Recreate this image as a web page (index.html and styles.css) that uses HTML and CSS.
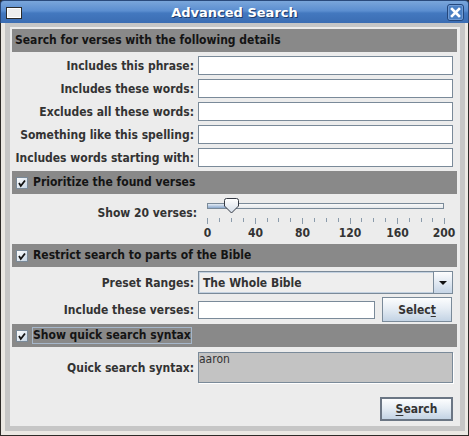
FILE: index.html
```html
<!DOCTYPE html>
<html>
<head>
<meta charset="utf-8">
<title>Advanced Search</title>
<link rel="stylesheet" href="styles.css">
</head>
<body>
<div class="window">
  <div class="titlebar">
    <svg class="win-icon" width="16" height="12" viewBox="0 0 16 12">
      <rect x="0.5" y="0.5" width="15" height="11" fill="#d8d8d8" stroke="#2b2b2b"/>
      <rect x="1.5" y="1.5" width="13" height="9" fill="#eeeeee" stroke="#ffffff"/>
    </svg>
    <div class="title">Advanced Search</div>
    <svg class="close" width="17" height="17" viewBox="0 0 17 17">
      <rect x="0.5" y="0.5" width="16" height="16" rx="2.5" fill="#4a7fc3" stroke="#23467b"/>
      <rect x="1.5" y="1.5" width="14" height="14" rx="1.5" fill="none" stroke="#6f9ad3"/>
      <path d="M5 5 L12 12 M12 5 L5 12" stroke="#ffffff" stroke-width="2.6" stroke-linecap="square"/>
    </svg>
  </div>
  <div class="frame">
    <div class="panel">
      <div class="head"><span class="head-text">Search for verses with the following details</span></div>
      <div class="grid fields">
        <label class="lbl">Includes this phrase:</label><div class="input"></div>
        <label class="lbl">Includes these words:</label><div class="input"></div>
        <label class="lbl">Excludes all these words:</label><div class="input"></div>
        <label class="lbl">Something like this spelling:</label><div class="input"></div>
        <label class="lbl">Includes words starting with:</label><div class="input"></div>
      </div>

      <div class="head check">
        <svg class="cb" width="12" height="12" viewBox="0 0 12 12"><use href="#cbox"/></svg>
        <span class="head-text">Prioritize the found verses</span>
      </div>
      <div class="grid slider-body">
        <label class="lbl slider-lbl">Show 20 verses:</label>
        <svg class="slider" width="255" height="50" viewBox="0 0 255 50">
          <defs>
            <linearGradient id="fillg" x1="0" y1="0" x2="0" y2="1">
              <stop offset="0" stop-color="#e4ecf5"/>
              <stop offset="1" stop-color="#8ba8cc"/>
            </linearGradient>
            <linearGradient id="trackg" x1="0" y1="0" x2="0" y2="1">
              <stop offset="0" stop-color="#fbfbfb"/>
              <stop offset="1" stop-color="#e2e6ea"/>
            </linearGradient>
            <linearGradient id="thumbg" x1="0" y1="0" x2="0" y2="1">
              <stop offset="0" stop-color="#ffffff"/>
              <stop offset="1" stop-color="#d4dde8"/>
            </linearGradient>
          </defs>
          <rect x="9.5" y="9.5" width="236" height="5" fill="url(#trackg)" stroke="#7a8a99"/>
          <rect x="10" y="10" width="23" height="4" fill="url(#fillg)"/>
          <path d="M26.5 6.5 Q26.5 4.5 28.5 4.5 H38.5 Q40.5 4.5 40.5 6.5 V12 L33.5 19 L26.5 12 Z" fill="url(#thumbg)" stroke="#353a44"/>
          <g stroke="#8b9bab" stroke-width="1">
            <line x1="9.5" y1="24" x2="9.5" y2="30"/>
            <line x1="21.5" y1="24" x2="21.5" y2="28"/>
            <line x1="33.5" y1="24" x2="33.5" y2="28"/>
            <line x1="45.5" y1="24" x2="45.5" y2="28"/>
            <line x1="57.5" y1="24" x2="57.5" y2="30"/>
            <line x1="69.5" y1="24" x2="69.5" y2="28"/>
            <line x1="80.5" y1="24" x2="80.5" y2="28"/>
            <line x1="92.5" y1="24" x2="92.5" y2="28"/>
            <line x1="104.5" y1="24" x2="104.5" y2="30"/>
            <line x1="116.5" y1="24" x2="116.5" y2="28"/>
            <line x1="128.5" y1="24" x2="128.5" y2="28"/>
            <line x1="140.5" y1="24" x2="140.5" y2="28"/>
            <line x1="152.5" y1="24" x2="152.5" y2="30"/>
            <line x1="163.5" y1="24" x2="163.5" y2="28"/>
            <line x1="175.5" y1="24" x2="175.5" y2="28"/>
            <line x1="187.5" y1="24" x2="187.5" y2="28"/>
            <line x1="199.5" y1="24" x2="199.5" y2="30"/>
            <line x1="211.5" y1="24" x2="211.5" y2="28"/>
            <line x1="223.5" y1="24" x2="223.5" y2="28"/>
            <line x1="234.5" y1="24" x2="234.5" y2="28"/>
            <line x1="246.5" y1="24" x2="246.5" y2="30"/>
          </g>
          <g class="tick-lbl" text-anchor="middle">
            <text x="9.5" y="43">0</text>
            <text x="57.5" y="43">40</text>
            <text x="104.5" y="43">80</text>
            <text x="152" y="43">120</text>
            <text x="199.5" y="43">160</text>
            <text x="246" y="43">200</text>
          </g>
        </svg>
      </div>

      <div class="head check">
        <svg class="cb" width="12" height="12" viewBox="0 0 12 12"><use href="#cbox"/></svg>
        <span class="head-text">Restrict search to parts of the Bible</span>
      </div>
      <div class="grid range-body">
        <label class="lbl">Preset Ranges:</label>
        <div class="combo">
          <span class="combo-text">The Whole Bible</span>
          <span class="combo-btn"><svg width="8" height="4" viewBox="0 0 8 4"><path d="M0 0 H8 L4 4 Z" fill="#111"/></svg></span>
        </div>
        <label class="lbl">Include these verses:</label>
        <div class="verse-row">
          <div class="input short"></div>
          <button class="btn select">Selec<u>t</u></button>
        </div>
      </div>

      <div class="head check">
        <svg class="cb" width="12" height="12" viewBox="0 0 12 12"><use href="#cbox"/></svg>
        <span class="head-text focus">Show quick search syntax</span>
      </div>
      <div class="grid syntax-body">
        <label class="lbl">Quick search syntax:</label>
        <div class="syntax">aaron</div>
        <button class="btn default search"><u>S</u>earch</button>
      </div>
    </div>
  </div>
</div>

<svg width="0" height="0" class="defs">
  <defs>
    <linearGradient id="cbg" x1="0" y1="0" x2="1" y2="1">
      <stop offset="0" stop-color="#ffffff"/>
      <stop offset="1" stop-color="#c4d3e3"/>
    </linearGradient>
    <g id="cbox">
      <rect x="0.5" y="0.5" width="11" height="11" fill="url(#cbg)" stroke="#7a8a99"/>
      <path d="M3 6 L4.8 9 L9 3.5" fill="none" stroke="#111" stroke-width="1.8"/>
    </g>
  </defs>
</svg>
</body>
</html>
```
FILE: styles.css
```css
* { box-sizing: border-box; }

html, body {
  margin: 0;
  padding: 0;
}

body {
  width: 469px;
  height: 436px;
  overflow: hidden;
  background: #2e2b28;
  font-family: "DejaVu Sans Condensed", "DejaVu Sans", sans-serif;
  font-stretch: condensed;
  font-size: 12px;
  color: #333333;
}

.window {
  width: 469px;
  height: 436px;
  display: flex;
  flex-direction: column;
}

.titlebar {
  flex: none;
  height: 23px;
  display: grid;
  grid-template-columns: 24px 1fr 24px;
  align-items: center;
  background: linear-gradient(#7aa6db 0%, #5b8ed0 45%, #4378bf 55%, #3b6db3 100%);
  border: 1px solid #2a4a7c;
  border-bottom: none;
  border-radius: 4px 4px 0 0;
}

.win-icon {
  margin-left: 5px;
  margin-top: 1px;
}

.title {
  text-align: center;
  font-family: "DejaVu Sans", sans-serif;
  font-stretch: normal;
  font-weight: bold;
  font-size: 13px;
  color: #ffffff;
  text-shadow: 1px 1px 0 #1f3c69;
}

.close {
  justify-self: end;
  margin-right: 4px;
}

.frame {
  flex: 1;
  display: flex;
  margin: 0 1px 1px 1px;
  background: #c6c6c6;
  border-left: 4px solid #ebe8e3;
  border-right: 3px solid #ebe8e3;
  border-bottom: 4px solid #ebe8e3;
  padding: 4px 5px 5px 5px;
}

.panel {
  flex: 1;
  background: #ececec;
  padding: 2px 3px 0 2px;
  display: flex;
  flex-direction: column;
}

.head {
  height: 23px;
  flex: none;
  display: flex;
  align-items: center;
  background: #898989;
  padding-left: 2px;
  font-weight: bold;
  color: #141414;
}

.head.check {
  padding-left: 4px;
  gap: 4px;
}

.head-text {
  border: 1px solid transparent;
  padding: 1px 0;
  line-height: 13px;
}

.head-text.focus {
  border-color: #a6b7ca;
}

.cb {
  display: block;
  flex: none;
}

.defs {
  position: absolute;
}

.grid {
  display: grid;
  grid-template-columns: 182px 255px;
  column-gap: 4px;
  align-items: center;
}

.lbl {
  text-align: right;
  white-space: nowrap;
  font-weight: bold;
  line-height: 14px;
}

.fields {
  row-gap: 4px;
  padding: 4px 0;
}

.input {
  height: 19px;
  background: #ffffff;
  border: 1px solid #7a8a99;
}

.input.short {
  width: 177px;
  height: 18px;
}

.slider-body {
  height: 50px;
  align-items: start;
}

.slider-lbl {
  margin-top: 12px;
  margin-right: -3px;
}

.slider {
  display: block;
  overflow: visible;
}

.tick-lbl {
  font-family: "DejaVu Sans Condensed", "DejaVu Sans", sans-serif;
  font-stretch: condensed;
  font-weight: bold;
  font-size: 12px;
  fill: #333333;
}

.range-body {
  padding: 4px 0 2px;
  row-gap: 3px;
}

.combo {
  height: 23px;
  display: flex;
  background: #eeeeee;
  border: 1px solid #7a8a99;
  box-shadow: inset 0 0 0 1px #c3d1e0;
}

.combo-text {
  flex: 1;
  display: flex;
  align-items: center;
  padding-left: 4px;
  font-weight: bold;
}

.combo-btn {
  width: 19px;
  display: flex;
  align-items: center;
  justify-content: center;
  border-left: 1px solid #7a8a99;
  background: linear-gradient(#fdfdfe, #c6d5e6);
}

.verse-row {
  display: flex;
  align-items: center;
  justify-content: space-between;
  padding-right: 1px;
}

.btn {
  font-family: inherit;
  font-stretch: condensed;
  font-size: 12px;
  font-weight: bold;
  color: #333333;
  padding: 0;
  margin: 0;
  background: linear-gradient(#fcfdfe 0%, #e6edf4 45%, #c3d3e4 100%);
  border: 1px solid #7a8a99;
}

.btn u {
  text-underline-offset: 2px;
}

.select {
  width: 70px;
  height: 25px;
}

.syntax-body {
  padding: 5px 0 5px;
  row-gap: 14px;
}

.syntax {
  height: 31px;
  background: #c3c3c3;
  border: 1px solid #7a8a99;
  box-shadow: 1px 1px 0 #ffffff;
  padding: 0;
  line-height: 13px;
  font-weight: normal;
  color: #333333;
}

.search {
  grid-column: 2;
  justify-self: end;
  width: 73px;
  height: 24px;
  border: 2px solid #6b7684;
}
```
